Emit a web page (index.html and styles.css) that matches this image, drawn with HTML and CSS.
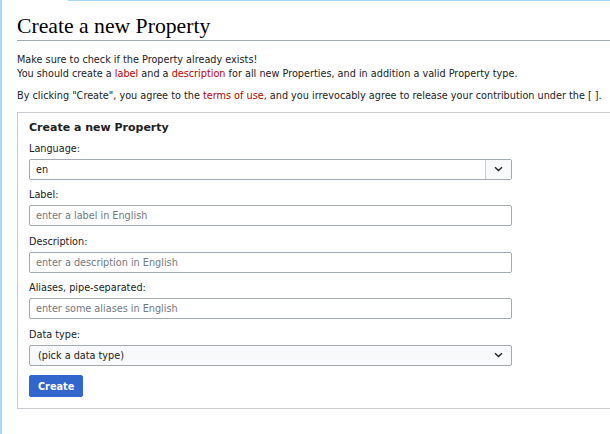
FILE: index.html
```html
<!DOCTYPE html>
<html lang="en">
<head>
<meta charset="utf-8">
<title>Create a new Property</title>
<link rel="stylesheet" href="styles.css">
</head>
<body>
<div class="page">
  <div class="topline"></div>
  <div class="content">
    <h1 class="title">Create a new Property</h1>
    <p class="intro">Make sure to check if the Property already exists!<br>You should create a <a class="new" href="#">label</a> and a <a class="new" href="#">description</a> for all new Properties, and in addition a valid Property type.</p>
    <p class="intro">By clicking "Create", you agree to the <a class="new" href="#">terms of use</a>, and you irrevocably agree to release your contribution under the [ ].</p>
    <form class="fieldset">
      <div class="legend">Create a new Property</div>
      <div class="field">
        <label class="label">Language:</label>
        <div class="combo">
          <span class="combo-text">en</span>
          <span class="combo-btn"><svg width="9" height="6" viewBox="0 0 9 6"><path d="M1 1.2 L4.5 4.5 L8 1.2" fill="none" stroke="#202122" stroke-width="1.4"/></svg></span>
        </div>
      </div>
      <div class="field">
        <label class="label">Label:</label>
        <div class="input"><span class="placeholder">enter a label in English</span></div>
      </div>
      <div class="field">
        <label class="label">Description:</label>
        <div class="input"><span class="placeholder">enter a description in English</span></div>
      </div>
      <div class="field">
        <label class="label">Aliases, pipe-separated:</label>
        <div class="input"><span class="placeholder">enter some aliases in English</span></div>
      </div>
      <div class="field">
        <label class="label">Data type:</label>
        <div class="select">
          <span class="select-text">(pick a data type)</span>
          <svg width="9" height="6" viewBox="0 0 9 6"><path d="M1 1.2 L4.5 4.5 L8 1.2" fill="none" stroke="#202122" stroke-width="1.4"/></svg>
        </div>
      </div>
      <button class="btn" type="button">Create</button>
    </form>
  </div>
</div>
</body>
</html>
```
FILE: styles.css
```css
html, body {
  margin: 0;
  padding: 0;
  overflow: hidden;
  background: #fff;
}
.page {
  width: 610px;
  height: 434px;
  box-sizing: border-box;
  border-left: 2px solid #a7d7f9;
  overflow: hidden;
  font-family: "DejaVu Sans", sans-serif;
  font-size: 9.7px;
  color: #202122;
}
.topline {
  margin-left: 66px;
  border-top: 1px solid #a7d7f9;
}
.content {
  padding-left: 15px;
}
.title {
  margin: 12px 0 0 0;
  font-family: "Liberation Serif", serif;
  font-weight: normal;
  font-size: 21.7px;
  line-height: 27px;
  color: #000;
  border-bottom: 1px solid #a2a9b1;
}
.intro {
  margin: 11.8px 0 0 0;
  line-height: 14.4px;
}
.intro + .intro {
  margin-top: 7px;
}
a.new {
  color: #ba0000;
  text-decoration: none;
}
.fieldset {
  margin-top: 9px;
  width: 700px;
  box-sizing: border-box;
  border: 1px solid #c8ccd1;
  padding: 7px 11px 10.5px 11px;
}
.legend {
  font-weight: bold;
  font-size: 11px;
  line-height: 16px;
  margin-bottom: 4.5px;
}
.field {
  margin-bottom: 7.5px;
  width: 483px;
}
.field:last-of-type {
  margin-bottom: 0;
}
.label {
  display: block;
  line-height: 16px;
  margin-bottom: 2px;
}
.input, .combo, .select {
  box-sizing: border-box;
  height: 21px;
  border: 1px solid #a2a9b1;
  border-radius: 2px;
  display: flex;
  align-items: center;
  background: #fff;
}
.input {
  padding-left: 6px;
}
.placeholder {
  color: #72777d;
}
.combo-text {
  flex: 1;
  padding-left: 6px;
  color: #202122;
}
.combo-btn {
  width: 25px;
  height: 100%;
  border-left: 1px solid #c8ccd1;
  background: #f8f9fa;
  display: flex;
  align-items: center;
  justify-content: center;
}
.select {
  background: #f8f9fa;
  padding: 0 8px 0 8px;
  justify-content: space-between;
}
.btn {
  margin-top: 9.5px;
  height: 22px;
  padding: 0 8px;
  border: 1px solid #36c;
  border-radius: 2px;
  background: #36c;
  color: #fff;
  font-family: "DejaVu Sans", sans-serif;
  font-weight: bold;
  font-size: 9.7px;
  display: block;
}
```
